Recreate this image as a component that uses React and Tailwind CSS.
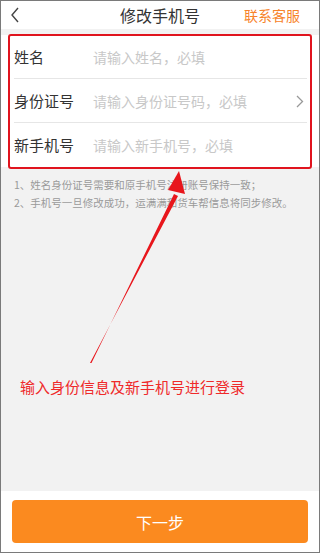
import React from 'react';

const font = { fontFamily: '"Noto Sans CJK SC", "Noto Sans", sans-serif' };

function Row({ label, placeholder, arrow, last }) {
  return (
    <div className="flex items-center h-[44px] ml-[13px] pr-[14px] relative">
      <span className="w-[79px] text-[15px] text-[#333]">{label}</span>
      <span className="flex-1 text-[14px] text-[#c8c8c8]">{placeholder}</span>
      {arrow && (
        <svg width="8" height="13" viewBox="0 0 8 13" className="mr-[1px]">
          <path d="M1 1l5.5 5.5L1 12" fill="none" stroke="#999" strokeWidth="1.3" />
        </svg>
      )}
      {!last && <div className="absolute left-0 right-[12px] bottom-0 h-px bg-[#e6e6e6]" />}
    </div>
  );
}

export default function App() {
  return (
    <div className="w-[320px] h-[553px] relative bg-[#f2f2f2] border border-[#7a7a7a] flex flex-col overflow-hidden" style={font}>
      {/* header */}
      <div className="h-[28px] bg-white flex items-center relative shrink-0">
        <svg width="10" height="16" viewBox="0 0 10 16" className="ml-[9px]">
          <path d="M8 1L2 8l6 7" fill="none" stroke="#444" strokeWidth="1.4" />
        </svg>
        <span className="absolute left-0 right-0 text-center text-[16px] text-[#333] pointer-events-none">修改手机号</span>
        <span className="ml-auto mr-[19px] text-[14px] text-[#f7832a]">联系客服</span>
      </div>

      {/* form */}
      <div className="mt-[6px] bg-white relative">
        <Row label="姓名" placeholder="请输入姓名，必填" />
        <Row label="身份证号" placeholder="请输入身份证号码，必填" arrow />
        <Row label="新手机号" placeholder="请输入新手机号，必填" last />
        <div className="absolute left-[7px] right-[7px] -top-[1px] -bottom-[2px] border-2 border-[#e0141e] rounded-[3px]" />
      </div>

      {/* notes */}
      <div className="px-[13px] pt-[9px] text-[10.5px] leading-[18px] text-[#9a9a9a]">
        <p>1、姓名身份证号需要和原手机号注册账号保持一致；</p>
        <p>2、手机号一旦修改成功，运满满和货车帮信息将同步修改。</p>
      </div>

      {/* annotation */}
      <div className="mt-auto mb-[93px] pl-[19px] text-[15px] text-[#ef2a2a]">输入身份信息及新手机号进行登录</div>

      <svg className="absolute left-0 top-0 pointer-events-none" width="320" height="553">
        <polygon points="89,362 90.5,362 173,193 177,195" fill="#e8161c" />
        <polygon points="178,170 167,189 184,193" fill="#e8161c" />
      </svg>

      {/* bottom */}
      <div className="h-[61px] bg-white shrink-0 px-[11px] flex items-center">
        <button className="w-full h-[43px] rounded-[4px] bg-[#fb8a1f] text-white text-[16px]">下一步</button>
      </div>
    </div>
  );
}
